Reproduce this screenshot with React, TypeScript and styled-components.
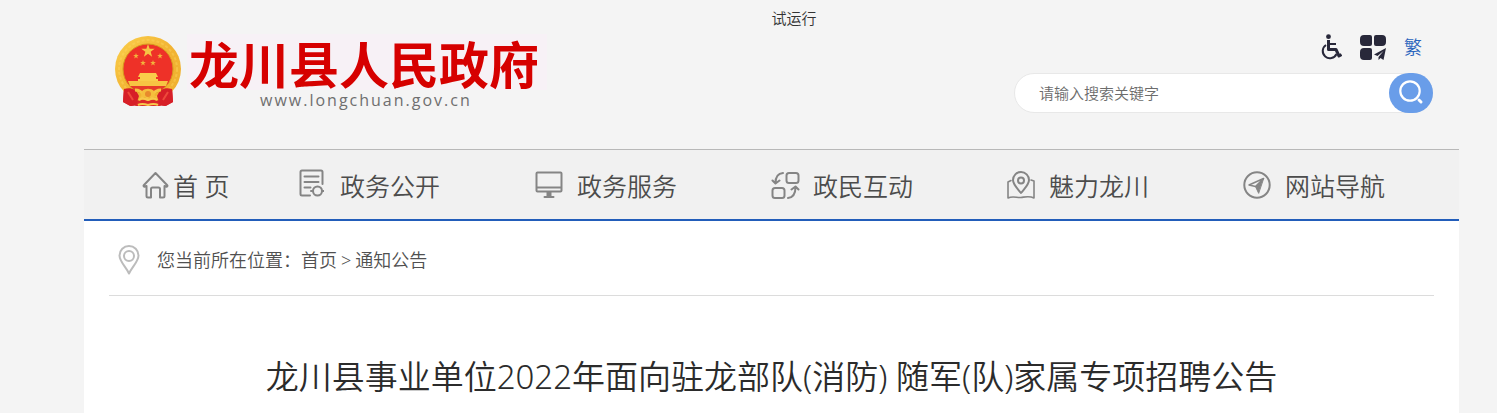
import React from "react";
import styled, { createGlobalStyle } from "styled-components";

const GlobalStyle = createGlobalStyle`
  * { box-sizing: border-box; }
  html { background: #f4f4f4; }
  body {
    margin: 0;
    background: #f4f4f4;
    color: #333;
    font-family: "Noto Sans", "Noto Sans CJK SC", sans-serif;
    font-weight: 350;
  }
  a { color: inherit; text-decoration: none; }
`;

const Page = styled.div`
  padding: 0 38px 0 84px;
`;

const Notice = styled.p`
  margin: 0;
  height: 34px;
  padding: 8px 0 0 50%;
  font-size: 15px;
  line-height: 20px;
`;

const Masthead = styled.div`
  display: flex;
  justify-content: space-between;
  align-items: flex-start;
  padding: 0 26px 36px 31px;
`;

const Logo = styled.a`
  display: flex;
  gap: 6px;
`;

const Emblem = styled.svg`
  width: 66px;
  height: 72px;
  margin-top: 2px;
  flex: none;
`;

const LogoText = styled.span`
  display: flex;
  flex-direction: column;
`;

const LogoName = styled.span`
  padding: 0 8px 0 2px;
  background: #f7f1f6;
  color: #d60000;
  font-family: "Noto Sans CJK SC", sans-serif;
  font-size: 50px;
  font-weight: 700;
  line-height: 56px;
  white-space: nowrap;
`;

const LogoUrl = styled.span`
  padding-left: 73px;
  color: #6f6f6f;
  font-family: "Open Sans", sans-serif;
  font-size: 16px;
  font-weight: 400;
  line-height: 20px;
  letter-spacing: 2px;
`;

const Side = styled.div`
  display: flex;
  flex-direction: column;
  gap: 13px;
  width: 419px;
`;

const Tools = styled.div`
  display: flex;
  justify-content: flex-end;
  align-items: center;
  gap: 18px;
  height: 26px;
  padding-right: 11px;
  color: #28283a;
  svg { display: block; }
`;

const ToolLink = styled.a`
  color: #2a64bd;
  font-size: 18px;
  line-height: 26px;
`;

const Search = styled.form`
  display: flex;
  height: 40px;
  border: 1px solid #e8e8e8;
  border-radius: 20px;
  background: #fff;
`;

const SearchInput = styled.input`
  flex: 1;
  min-width: 0;
  padding: 0 24px;
  border: 0;
  background: transparent;
  outline: 0;
  color: #333;
  font: inherit;
  font-size: 15px;
  &::placeholder { color: #6c6c6c; opacity: 1; }
`;

const SearchButton = styled.button`
  display: grid;
  place-items: center;
  width: 44px;
  height: 40px;
  margin: -1px;
  padding: 0;
  border: 0;
  border-radius: 20px;
  background: #699de9;
  color: #fff;
  cursor: pointer;
`;

const Nav = styled.nav`
  display: grid;
  grid-template-columns: 157fr repeat(4, 236fr) 216fr;
  padding-left: 58px;
  border-top: 1px solid #b8b8b8;
  border-bottom: 2px solid #225dba;
  background: #f1f1f1;
`;

const NavLink = styled.a<{ $gap: number }>`
  display: flex;
  align-items: center;
  gap: ${(p) => p.$gap}px;
  height: 69px;
  color: #4c4c4c;
  font-size: 25px;
  line-height: 36px;
  white-space: nowrap;
  svg { flex: none; color: #858585; }
  span { padding-top: 2px; }
`;

const Content = styled.main`
  padding: 0 25px 12px;
  background: #fff;
`;

const Breadcrumb = styled.nav`
  display: flex;
  align-items: center;
  height: 75px;
  padding: 3px 9px 0;
  border-bottom: 1px solid #dcdcdc;
  color: #505050;
  font-size: 18px;
  line-height: 24px;
  svg { flex: none; margin-right: 17px; }
`;

const Crumbs = styled.span`
  display: flex;
  gap: 4px;
`;

const Title = styled.h1`
  margin: 0;
  padding-top: 57px;
  color: #2b2b2b;
  font-size: 33px;
  font-weight: 350;
  line-height: 48px;
  text-align: center;
`;

const star = (x: number, y: number, r: number) =>
  Array.from({ length: 10 }, (_, i) => {
    const a = (Math.PI / 5) * i - Math.PI / 2;
    const q = i % 2 ? r * 0.4 : r;
    return `${x + q * Math.cos(a)},${y + q * Math.sin(a)}`;
  }).join(" ");

const NationalEmblem = () => (
  <Emblem viewBox="0 0 66 72" aria-hidden="true">
    <defs>
      <linearGradient id="gold" x1="0" y1="0" x2="1" y2="1">
        <stop offset="0" stopColor="#fbd04c" />
        <stop offset=".5" stopColor="#f2b433" />
        <stop offset="1" stopColor="#efb02f" />
      </linearGradient>
    </defs>
    <path d="M9 50 8 66l8 4 17-2 17 2 8-4-1-16Z" fill="#d8232a" />
    <circle cx="33" cy="33" r="33" fill="url(#gold)" />
    <circle cx="33" cy="33" r="29" fill="none" stroke="#ffdc68" strokeWidth="2" strokeDasharray="3 2" opacity=".35" />
    <circle cx="33" cy="33" r="25" fill="#ee3128" stroke="#d7981f" />
    <polygon points={star(33, 15, 7)} fill="#f6c445" />
    {[[21, 20], [45, 20], [28, 27], [38, 27]].map(([x, y]) => (
      <polygon key={`${x}-${y}`} points={star(x, y, 3)} fill="#f2b23c" />
    ))}
    <path d="M25 37h16l2 4h-2v2h2v2H23v-2h2v-2h-2Z" fill="#f9cd4a" />
    <path d="M13 45h40l-2 5H15Z" fill="#f7c443" />
    <path d="M16 50h34l-5 5H21Z" fill="#e63a29" />
    <path d="M9 53c7-2 12 0 15 7l-3 9-6 1-7-4Zm48 0c-7-2-12 0-15 7l3 9 6 1 7-4Z" fill="#d71f27" />
    <path d="m13 56 5 8m35-8-5 8" stroke="#ee4a3b" strokeWidth="2" />
    <path d="M20 54c5 0 7 2 9 5m17-5c-5 0-7 2-9 5" fill="none" stroke="#f6c442" strokeWidth="3" />
    <path d="M27 55c3-3 9-3 12 0l1 6H26Z" fill="#f5be3c" />
    <circle cx="33" cy="58" r="3" fill="#e88a2c" />
    <path d="M20 70c4-7 9-7 13-5 4-2 9-2 13 5Z" fill="#dc2828" />
    <path d="M24 64c3-3 6-1 9 0 3-1 6-3 9 0M23 69c4-2 7-1 10 0 3-1 6-2 10 0" fill="none" stroke="#f7c94c" strokeWidth="2" />
  </Emblem>
);

type IconProps = { w?: number; h?: number; children: React.ReactNode };
const Icon = ({ w = 28, h = 28, children }: IconProps) => (
  <svg width={w} height={h} viewBox={`0 0 ${w} ${h}`} fill="none" stroke="currentColor" strokeWidth="2" strokeLinecap="round" strokeLinejoin="round" aria-hidden="true">
    {children}
  </svg>
);

const items = [
  {
    label: "首\u00a0页", gap: 4,
    icon: <Icon w={27}><path d="M3 15.500c-1 .4-2-.5-1-1.500L13.500 2 25 14c1 1 0 2-1 1.500L22.500 15v10c0 1-.5 1.500-1.500 1.500h-3V18c0-1-.5-1.500-1.500-1.500h-6c-1 0-1.500.5-1.500 1.500v8.500H6c-1 0-1.500-.5-1.500-1.500V15Z" /></Icon>,
  },
  {
    label: "政务公开", gap: 16,
    icon: <Icon w={25} h={32}><path d="M11 26.500H3c-1 0-1.500-.5-1.500-1.500V3c0-1 .5-1.500 1.500-1.500h19c1 0 1.500.5 1.500 1.500v12M5.500 7.500h14M5.500 13h14M5.500 18.500h6" /><circle cx="18.500" cy="22" r="4.500" /><path d="M12 22h1.500m10 0H25" /></Icon>,
  },
  {
    label: "政务服务", gap: 14,
    icon: <Icon><path d="M2.500 1.500h23c.6 0 1 .4 1 1v17c0 .6-.4 1-1 1h-23c-.6 0-1-.4-1-1v-17c0-.6.4-1 1-1ZM2 16.500h24M9.500 26h9" /><path d="M14 20v6" strokeWidth="5" strokeLinecap="butt" /></Icon>,
  },
  {
    label: "政民互动", gap: 13,
    icon: <Icon w={29}><rect x="15.500" y="2" width="12" height="10" rx="2.500" /><rect x="1.500" y="17" width="12" height="10" rx="2.500" /><path d="M12 2C7 2.500 4.500 6 4.500 12M1.500 9.500l3 3 4-3M17 27c5-.5 7.500-5 7.500-11M20.500 18.500l4-3 3 3" /></Icon>,
  },
  {
    label: "魅力龙川", gap: 14,
    icon: <Icon><path d="M14 22c-4-5-8-8.500-8-13a8 8 0 0 1 16 0c0 4.500-4 8-8 13Z" /><circle cx="14" cy="9.500" r="3" /><path d="M4 9.500 1 11v16c5-2.500 9 0 13-.5s8-2 13 .5V10l-3-1" strokeWidth="1.600" /></Icon>,
  },
  {
    label: "网站导航", gap: 14,
    icon: <Icon><circle cx="14" cy="14" r="12.700" /><path d="M20.500 7.500 6 14l6.500 1.500Z" strokeWidth="1.500" /><path d="m20.500 7.500-8 8L15.500 22Z" fill="currentColor" strokeWidth="1" /></Icon>,
  },
];

export default function App() {
  return (
    <>
      <GlobalStyle />
      <Page>
        <header>
          <Notice>试运行</Notice>
          <Masthead>
            <Logo href="#">
              <NationalEmblem />
              <LogoText>
                <LogoName>龙川县人民政府</LogoName>
                <LogoUrl>www.longchuan.gov.cn</LogoUrl>
              </LogoText>
            </Logo>
            <Side>
              <Tools>
                <a href="#" aria-label="无障碍">
                  <svg width="21" height="26" viewBox="0 0 21 26" fill="none" stroke="currentColor">
                    <circle cx="7.500" cy="2.700" r="2.400" fill="currentColor" stroke="none" />
                    <path d="M7.500 6v9.500h7.500l3 6.500 2.500-1.500" strokeWidth="3" strokeLinejoin="round" />
                    <path d="M8 10h7" strokeWidth="2" />
                    <path d="M5 11a7.200 7.200 0 1 0 10.500 9" strokeWidth="2" />
                  </svg>
                </a>
                <a href="#" aria-label="应用">
                  <svg width="26" height="26" viewBox="0 0 26 26" fill="currentColor">
                    <path d="M4 1h6a2 2 0 0 1 2 2v7a2 2 0 0 1-2 2H4a4 4 0 0 1-4-4V5a4 4 0 0 1 4-4ZM16 1h6a4 4 0 0 1 4 4v3a4 4 0 0 1-4 4h-6a2 2 0 0 1-2-2V3a2 2 0 0 1 2-2ZM4 14h6a2 2 0 0 1 2 2v8a2 2 0 0 1-2 2H4a4 4 0 0 1-4-4v-4a4 4 0 0 1 4-4ZM26 14l-12 6.500 3.500 1.500 6-5-5 6v3l2-2 3 2Z" />
                  </svg>
                </a>
                <ToolLink href="#">繁</ToolLink>
              </Tools>
              <Search onSubmit={(e) => e.preventDefault()}>
                <SearchInput type="text" placeholder="请输入搜索关键字" aria-label="请输入搜索关键字" />
                <SearchButton type="submit" aria-label="搜索">
                  <svg width="26" height="26" viewBox="0 0 26 26" fill="none" stroke="currentColor" aria-hidden="true">
                    <circle cx="12" cy="11" r="9.700" strokeWidth="2.200" />
                    <path d="m21 20 2 2" strokeWidth="3" strokeLinecap="round" />
                  </svg>
                </SearchButton>
              </Search>
            </Side>
          </Masthead>
        </header>
        <Nav>
          {items.map((it) => (
            <NavLink key={it.label} href="#" $gap={it.gap}>
              {it.icon}
              <span>{it.label}</span>
            </NavLink>
          ))}
        </Nav>
        <Content>
          <Breadcrumb aria-label="当前位置">
            <svg width="22" height="30" viewBox="0 0 22 30" fill="none" stroke="#bcbcbc" strokeWidth="2" strokeLinejoin="round" aria-hidden="true">
              <path d="M11 28.500C8 22 1.500 16.500 1.500 10.500a9.500 9.500 0 0 1 19 0C20.500 16.500 14 22 11 28.500Z" />
              <circle cx="11" cy="11" r="5" />
            </svg>
            <span>您当前所在位置：</span>
            <Crumbs>
              <a href="#">首页</a>
              <span>&gt;</span>
              <a href="#">通知公告</a>
            </Crumbs>
          </Breadcrumb>
          <Title>龙川县事业单位2022年面向驻龙部队(消防) 随军(队)家属专项招聘公告</Title>
        </Content>
      </Page>
    </>
  );
}
